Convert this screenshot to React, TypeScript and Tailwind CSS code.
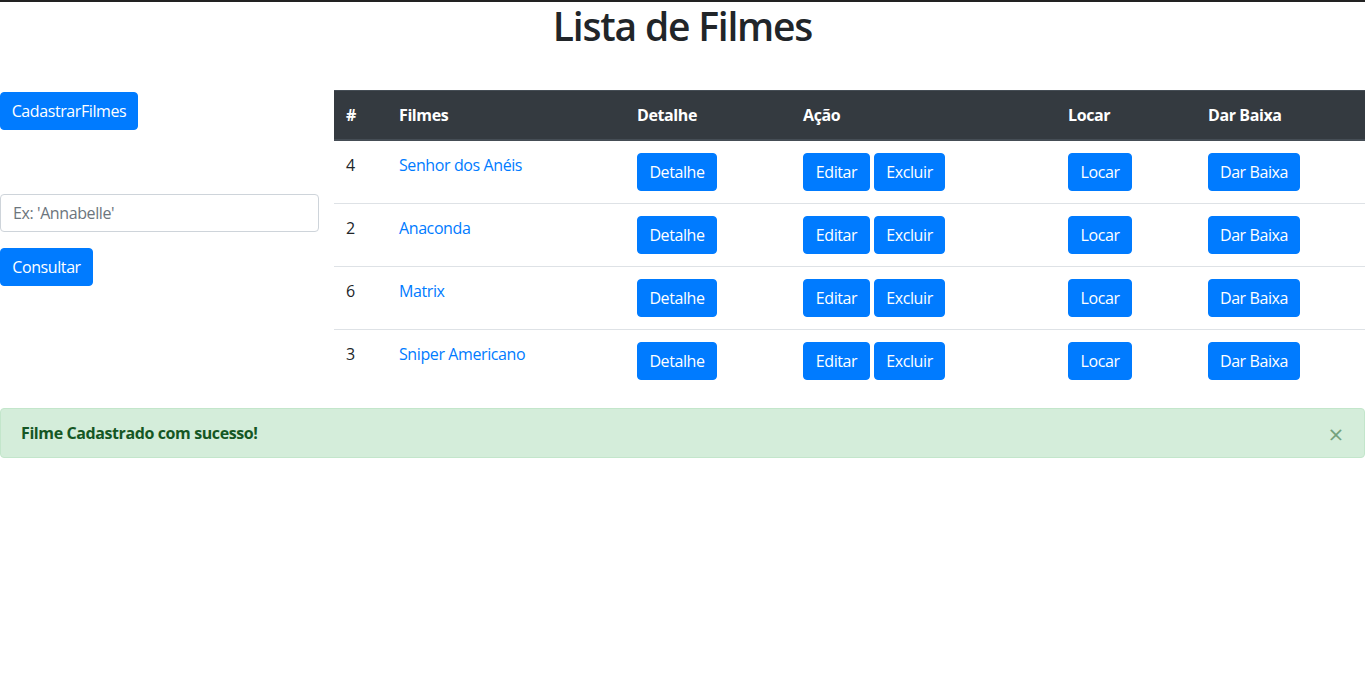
import React from "react";

const filmes = [
  { id: 4, nome: "Senhor dos Anéis" },
  { id: 2, nome: "Anaconda" },
  { id: 6, nome: "Matrix" },
  { id: 3, nome: "Sniper Americano" },
];

const btn =
  "inline-flex items-center justify-center h-[38px] rounded-[4px] bg-[#007bff] text-white text-[16px] leading-[24px] border border-[#007bff] tracking-[-0.4px]";

export default function App() {
  return (
    <div
      className="min-h-[677px] bg-white text-[#212529] border-t-2 border-[#222222] tracking-[-0.4px]"
      style={{ fontFamily: '"Open Sans", "Noto Sans", sans-serif' }}
    >
      <h1 className="text-center text-[39px] leading-[48px] font-semibold text-[#212529] mb-[40px] tracking-[-1.2px]">
        Lista de Filmes
      </h1>
      <div className="flex">
        <div className="w-[334px] shrink-0 flex flex-col items-start pt-[2px]">
          <button className={btn + " w-[138px]"}>CadastrarFilmes</button>
          <input
            className="mt-[64px] w-[319px] h-[38px] border border-[#ced4da] rounded-[4px] px-[12px] text-[16px] text-[#495057] placeholder:text-[#6c757d] outline-none"
            placeholder="Ex: 'Annabelle'"
          />
          <button className={btn + " w-[93px] mt-[16px]"}>Consultar</button>
        </div>
        <table className="table-fixed w-[1031px] border-collapse text-[16px] leading-[24px]">
          <colgroup>
            <col className="w-[53px]" />
            <col className="w-[238px]" />
            <col className="w-[166px]" />
            <col className="w-[265px]" />
            <col className="w-[140px]" />
            <col className="w-[169px]" />
          </colgroup>
          <thead>
            <tr className="bg-[#343a40] text-white">
              {["#", "Filmes", "Detalhe", "Ação", "Locar", "Dar Baixa"].map((h) => (
                <th
                  key={h}
                  className="text-left font-bold p-[12px] border-t border-[#454d55] border-b-2 border-b-[#454d55] align-bottom"
                >
                  {h}
                </th>
              ))}
            </tr>
          </thead>
          <tbody>
            {filmes.map((f, i) => (
              <tr key={f.id} className={i > 0 ? "border-t border-[#dee2e6]" : ""}>
                <td className="p-[12px] align-top">{f.id}</td>
                <td className="p-[12px] align-top">
                  <a className="text-[#007bff]">{f.nome}</a>
                </td>
                <td className="p-[12px] align-top">
                  <button className={btn + " w-[80px]"}>Detalhe</button>
                </td>
                <td className="p-[12px] align-top">
                  <div className="flex gap-[4px]">
                    <button className={btn + " w-[67px]"}>Editar</button>
                    <button className={btn + " w-[71px]"}>Excluir</button>
                  </div>
                </td>
                <td className="p-[12px] align-top">
                  <button className={btn + " w-[64px]"}>Locar</button>
                </td>
                <td className="p-[12px] align-top">
                  <button className={btn + " w-[92px]"}>Dar Baixa</button>
                </td>
              </tr>
            ))}
          </tbody>
        </table>
      </div>
      <div className="mt-[16px] relative flex items-center h-[50px] bg-[#d4edda] border border-[#c3e6cb] rounded-[4px] px-[20px] text-[#155724] font-bold text-[16px]">
        Filme Cadastrado com sucesso!
        <span className="absolute right-[21px] top-[13px] text-[26px] leading-[24px] font-normal opacity-50">
          ×
        </span>
      </div>
    </div>
  );
}
